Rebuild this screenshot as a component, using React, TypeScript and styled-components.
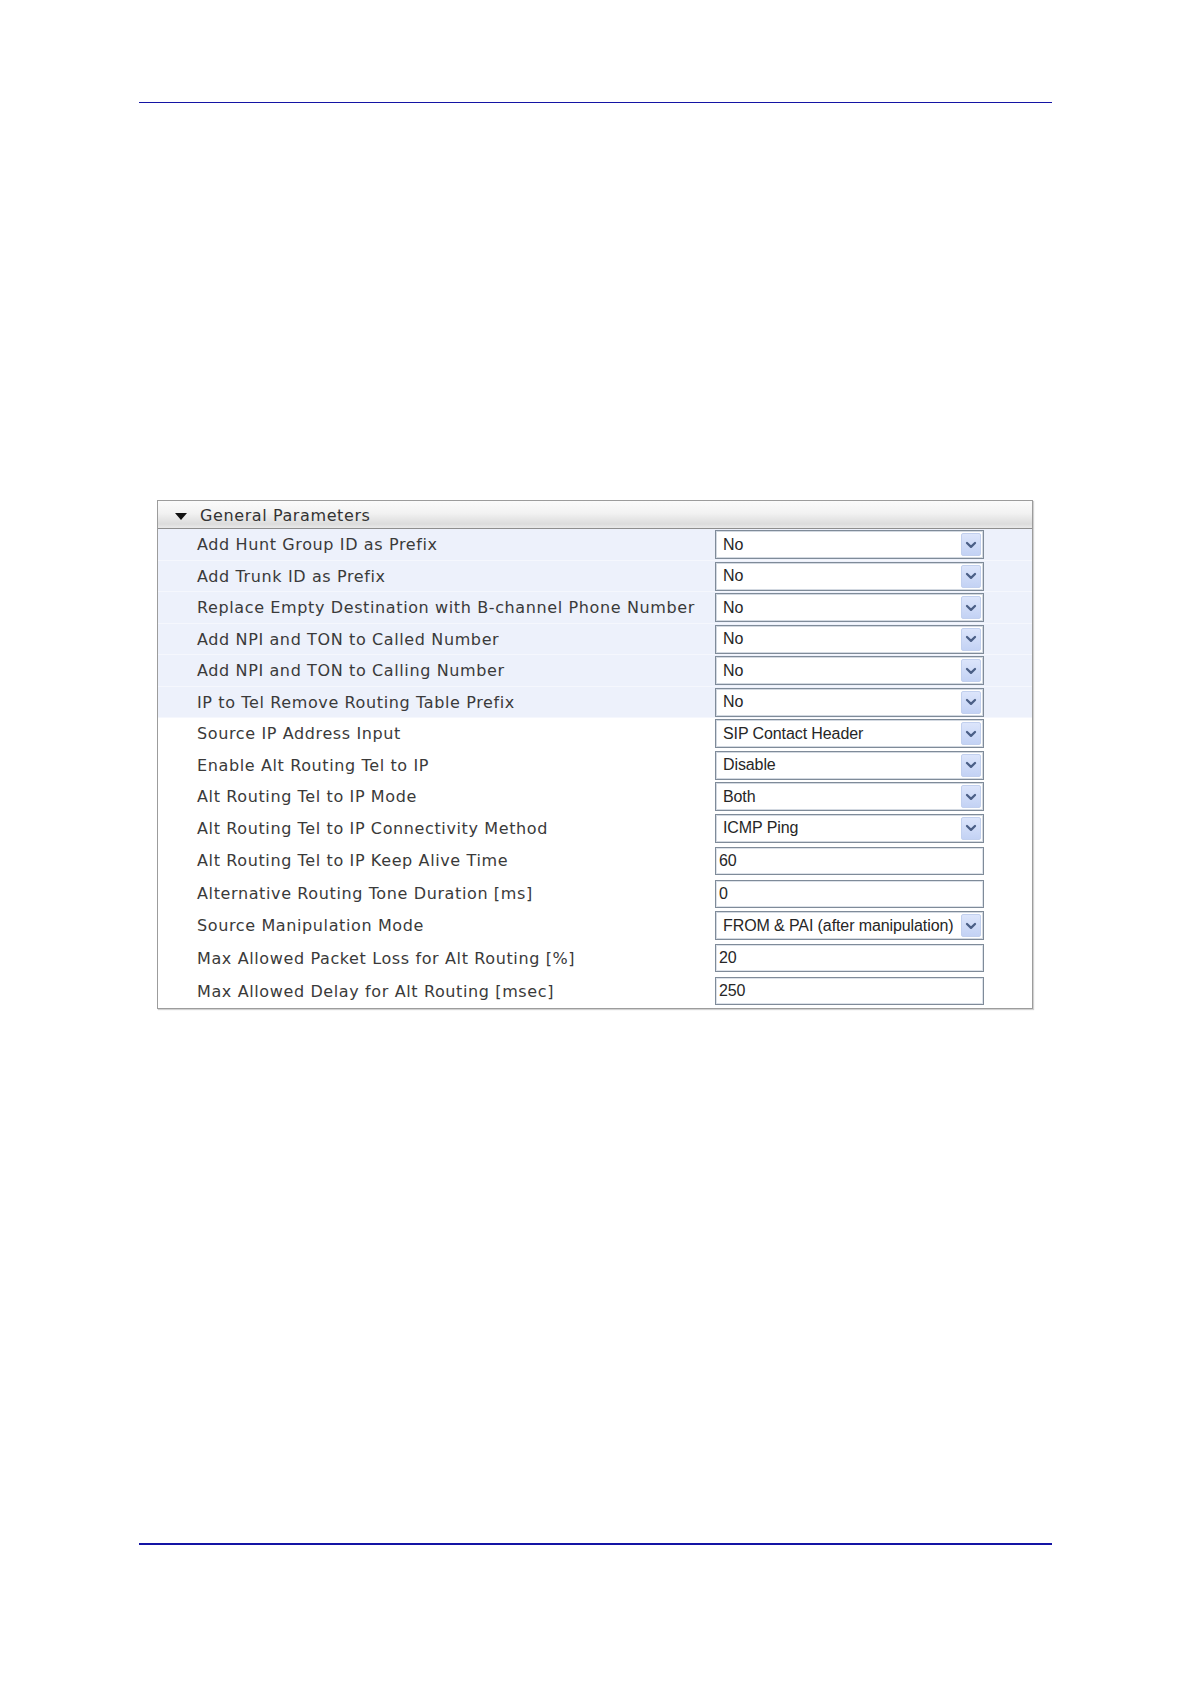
import styled, { createGlobalStyle } from 'styled-components'

const GlobalStyle = createGlobalStyle`
    html, body {
        margin: 0;
        padding: 0;
        background: #ffffff;
    }
`

const Page = styled.div`
    width: 1191px;
    height: 1683px;
    box-sizing: border-box;
    padding-top: 102px;
    display: flex;
    flex-direction: column;
`

const Rule = styled.div<{ $thick: number }>`
    margin-left: 139px;
    width: 913px;
    height: ${p => p.$thick}px;
    background: #1414a4;
`

const Panel = styled.div`
    margin: 397px 0 0 157px;
    width: 876px;
    box-sizing: border-box;
    border: 1px solid #9c9c9c;
    box-shadow: 1px 1px 1px rgba(0, 0, 0, 0.18);
    background: #ffffff;
`

const Footer = styled.div`
    margin-top: 534px;
`

const Header = styled.div`
    height: 28px;
    box-sizing: border-box;
    padding: 2px 0 0 17px;
    display: flex;
    align-items: center;
    gap: 13px;
    border-bottom: 1px solid #8e8e8e;
    background: linear-gradient(#fbfbfb 0%, #f2f2f2 45%, #dcdcdc 85%, #e9e9e9 100%);
    font-family: "DejaVu Sans", Verdana, sans-serif;
    font-size: 16px;
    letter-spacing: 0.6px;
    color: #333;
`

const Caret = styled.span`
    width: 0;
    height: 0;
    border-left: 6px solid transparent;
    border-right: 6px solid transparent;
    border-top: 7px solid #111;
    margin-top: 2px;
`

const Row = styled.div<{ $h: number; $tint: boolean }>`
    height: ${p => p.$h}px;
    display: grid;
    grid-template-columns: 557px 269px 1fr;
    align-items: center;
    background: ${p => (p.$tint ? '#edf1fb' : '#ffffff')};
    box-shadow: ${p => (p.$tint ? 'inset 0 -1px 0 #f5f7fd' : 'none')};
`

const Label = styled.div`
    padding-left: 39px;
    font-family: "DejaVu Sans", Verdana, sans-serif;
    font-size: 16px;
    letter-spacing: 0.62px;
    color: #3a3a3a;
    white-space: nowrap;
`

const Select = styled.div`
    height: 29px;
    box-sizing: border-box;
    border: 1px solid #7f8b99;
    box-shadow: inset 0 0 0 1px #d3d9e1;
    background: #fff;
    display: flex;
    align-items: center;
    justify-content: space-between;
    padding: 0 2px 0 7px;
    font-family: "Liberation Sans", Arial, sans-serif;
    font-size: 16px;
    letter-spacing: -0.1px;
    color: #262626;
`

const Input = styled.div`
    height: 28px;
    box-sizing: border-box;
    border: 1px solid #7f8b99;
    box-shadow: inset 0 0 0 1px #dde2e9;
    background: #fff;
    display: flex;
    align-items: center;
    padding-left: 3px;
    font-family: "Liberation Sans", Arial, sans-serif;
    font-size: 16px;
    letter-spacing: -0.1px;
    color: #262626;
`

const DropButton = styled.span`
    width: 20px;
    height: 23px;
    box-sizing: border-box;
    border: 1px solid #c2d0ee;
    border-radius: 2px;
    background: linear-gradient(#dce5fb, #c3d2f4);
    display: flex;
    align-items: center;
    justify-content: center;
`

const Chevron = () => (
    <svg width="12" height="8" viewBox="0 0 12 8">
        <path d="M2 2 L6 5.8 L10 2" fill="none" stroke="#4b5f86" strokeWidth="2.3" strokeLinecap="round" strokeLinejoin="round" />
    </svg>
)

interface Field {
    label: string,
    value: string,
    kind: 'select' | 'text'
}

const fields: Field[] = [
    { label: 'Add Hunt Group ID as Prefix', value: 'No', kind: 'select' },
    { label: 'Add Trunk ID as Prefix', value: 'No', kind: 'select' },
    { label: 'Replace Empty Destination with B-channel Phone Number', value: 'No', kind: 'select' },
    { label: 'Add NPI and TON to Called Number', value: 'No', kind: 'select' },
    { label: 'Add NPI and TON to Calling Number', value: 'No', kind: 'select' },
    { label: 'IP to Tel Remove Routing Table Prefix', value: 'No', kind: 'select' },
    { label: 'Source IP Address Input', value: 'SIP Contact Header', kind: 'select' },
    { label: 'Enable Alt Routing Tel to IP', value: 'Disable', kind: 'select' },
    { label: 'Alt Routing Tel to IP Mode', value: 'Both', kind: 'select' },
    { label: 'Alt Routing Tel to IP Connectivity Method', value: 'ICMP Ping', kind: 'select' },
    { label: 'Alt Routing Tel to IP Keep Alive Time', value: '60', kind: 'text' },
    { label: 'Alternative Routing Tone Duration [ms]', value: '0', kind: 'text' },
    { label: 'Source Manipulation Mode', value: 'FROM & PAI (after manipulation)', kind: 'select' },
    { label: 'Max Allowed Packet Loss for Alt Routing [%]', value: '20', kind: 'text' },
    { label: 'Max Allowed Delay for Alt Routing [msec]', value: '250', kind: 'text' },
]

const App = () => {
    return (
        <>
            <GlobalStyle />
            <Page>
                <Rule $thick={1} />
                <Panel>
                    <Header>
                        <Caret />
                        <span>General Parameters</span>
                    </Header>
                    {fields.map((field, index) => (
                        <Row key={field.label} $h={field.kind === 'select' ? 31.5 : 33} $tint={index < 6}>
                            <Label>{field.label}</Label>
                            {field.kind === 'select' ? (
                                <Select>
                                    <span>{field.value}</span>
                                    <DropButton><Chevron /></DropButton>
                                </Select>
                            ) : (
                                <Input>{field.value}</Input>
                            )}
                            <span />
                        </Row>
                    ))}
                </Panel>
                <Footer>
                    <Rule $thick={2} />
                </Footer>
            </Page>
        </>
    )
}

export default App
